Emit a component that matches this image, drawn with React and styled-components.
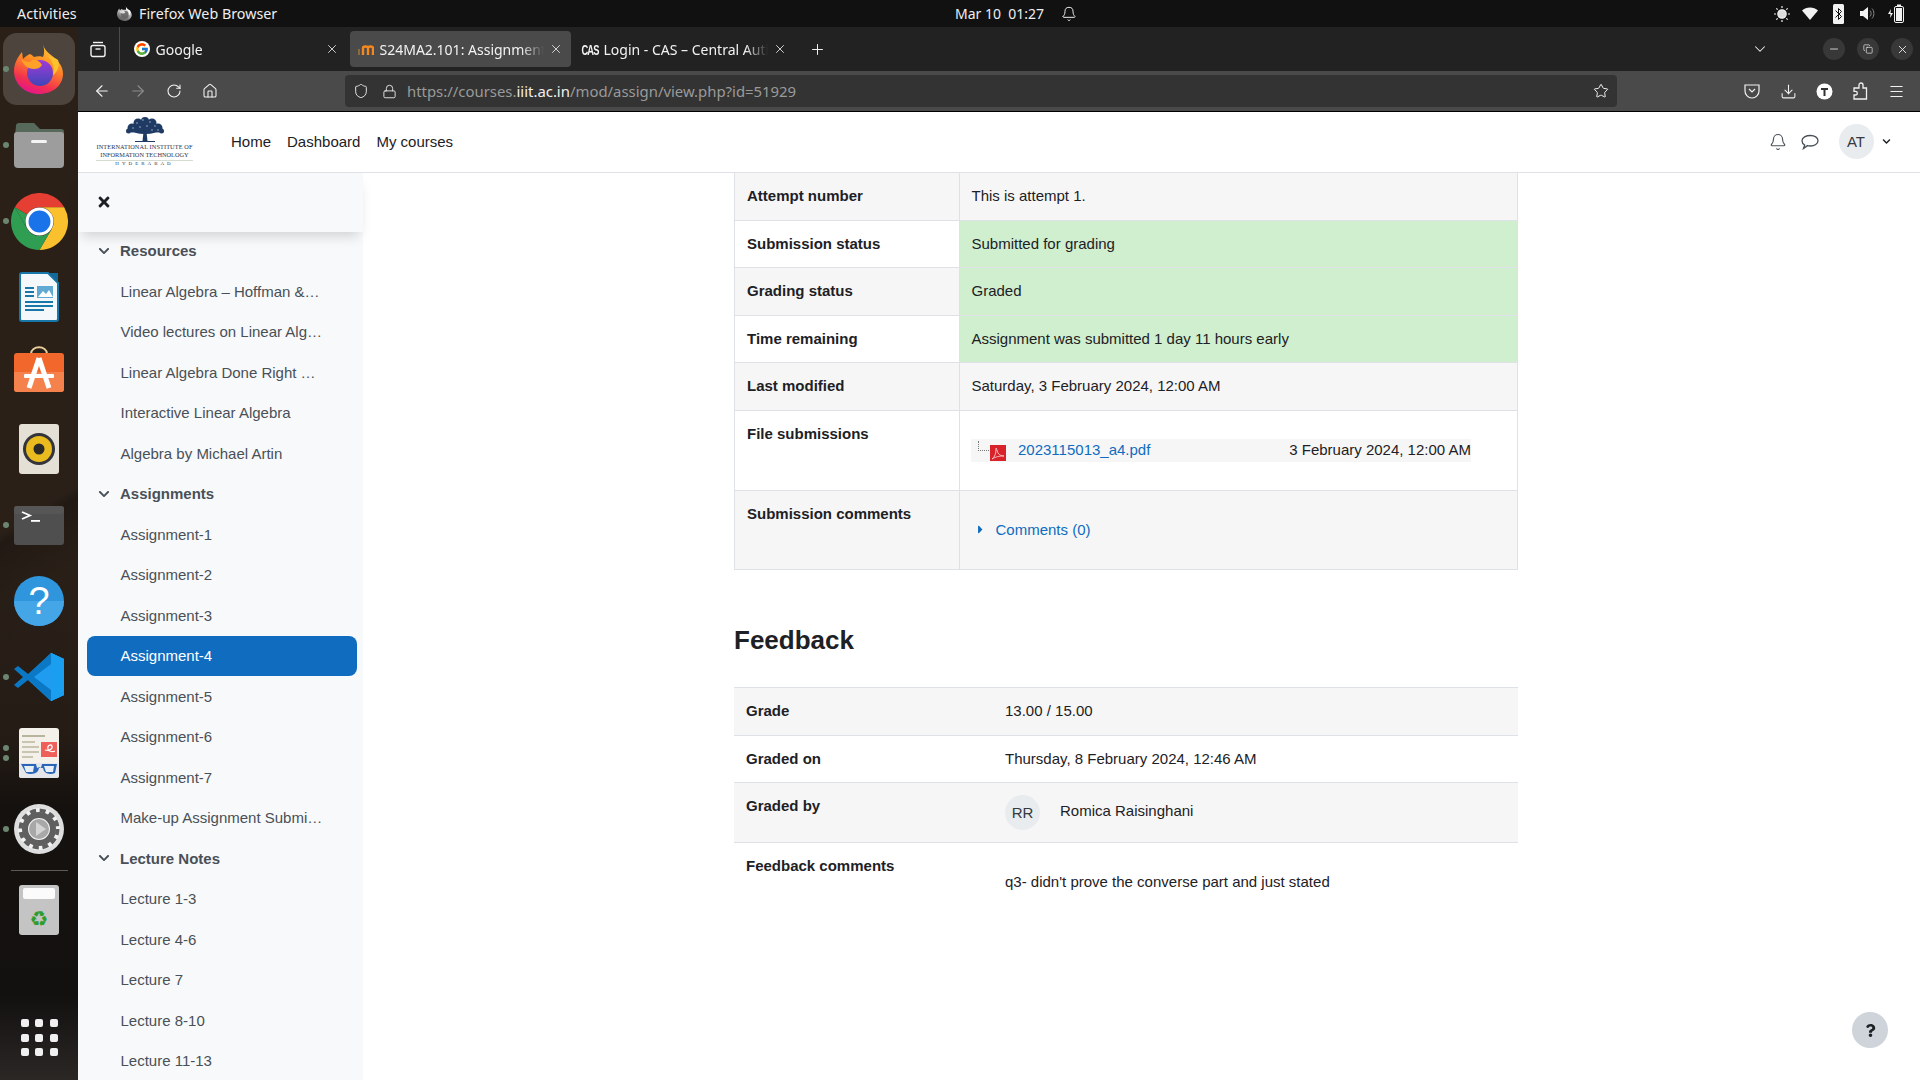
import React from 'react'
import styled, { createGlobalStyle } from 'styled-components'
import {
  ArrowLeft, ArrowRight, RotateCw, House, Shield, Lock, Star, Download, Menu,
  ChevronDown, X, Plus, Bell, Minus, Copy,
} from 'lucide-react'
import { FcGoogle } from 'react-icons/fc'
import { FaTimes, FaChevronDown, FaCaretRight, FaQuestion } from 'react-icons/fa'

const GlobalStyle = createGlobalStyle`
html, body { margin: 0; padding: 0; background: #fff; overflow: hidden; }
* { box-sizing: border-box; }
`

const Screen = styled.div`
width: 1920px;
height: 1080px;
overflow: hidden;
display: flex;
flex-direction: column;
position: relative;
font-family: "Liberation Sans", Arial, sans-serif;
font-size: 15px;
color: #1d2125;`

/* gnome top bar */
const TopBar = styled.div`
height: 27px;
flex: none;
background: #111;
color: #eee;
display: flex;
align-items: center;
font-family: "Noto Sans", sans-serif;
font-size: 14.3px;`

const Activities = styled.span`
margin-left: 17px;
width: 100px;`

const AppName = styled.span`
display: flex;
align-items: center;
gap: 7px;
width: 838px;`

const MonoIcon = styled.span`
display: flex;
filter: grayscale(1) brightness(1.3);`

const Clock = styled.span`
width: 106px;
font-size: 14px;
white-space: pre;`

const TrayIcons = styled.div`
margin-left: auto;
display: flex;
align-items: center;
padding-right: 10px;`

const TrayIcon = styled.span`
width: 28.5px;
display: flex;
justify-content: center;`

const Body = styled.div`
flex: 1;
display: flex;
min-height: 0;`

/* dock */
const Dock = styled.div`
width: 78px;
flex: none;
display: flex;
flex-direction: column;
align-items: center;
padding: 6px 0 24px;
gap: 4px;
background:
  linear-gradient(148deg, transparent 0, transparent 46%, rgba(0,0,0,.22) 47%, rgba(0,0,0,.05) 52%, transparent 58%),
  linear-gradient(180deg, #2a2018 0, #2a2018 52%, #241b15 68%, #15110e 74%, #131110 92%, #2a2725 100%);`

const DockItem = styled.div`
position: relative;
width: 72px;
height: 72px;
flex: none;
border-radius: 14px;
display: flex;
align-items: center;
justify-content: center;
background: ${props => props.$active ? "#4c443d" : "transparent"};`

const Dots = styled.div`
position: absolute;
left: 0;
top: 50%;
transform: translateY(-50%);
display: flex;
flex-direction: column;
gap: 4px;`

const Dot = styled.span`
display: block;
width: 6px;
height: 6px;
border-radius: 50%;
background: #6c8570;`

const DockSeparator = styled.div`
width: 57px;
height: 1px;
flex: none;
background: #5c5a58;
margin: 1px 0 -1px;`

const AppGrid = styled.div`
margin-top: auto;
display: grid;
grid-template-columns: repeat(3, 8px);
grid-auto-rows: 8px;
gap: 6.5px;`

const AppGridDot = styled.span`
background: #f0f0f0;
border-radius: 2px;`

/* firefox */
const Browser = styled.div`
flex: 1;
min-width: 0;
display: flex;
flex-direction: column;`

const TabStrip = styled.div`
height: 44px;
flex: none;
background: #222;
display: flex;
align-items: center;
color: #f2f2f2;
font-family: "Noto Sans", sans-serif;
font-size: 14px;`

const TabManager = styled.div`
width: 42px;
height: 44px;
flex: none;
padding-right: 2px;
display: flex;
align-items: center;
justify-content: center;
border-right: 1px solid #4c4c4c;
margin-right: 6px;`

const Tab = styled.div`
width: 221px;
height: 36px;
flex: none;
margin-right: 3px;
border-radius: 4px;
padding: 0 8px;
display: flex;
align-items: center;
gap: 5.5px;
background: ${props => props.$active ? "#4a4a4a" : "transparent"};`

const TabIcon = styled.span`
width: 16px;
height: 16px;
flex: none;
display: flex;
align-items: center;
justify-content: center;`

const GoogleBadge = styled(TabIcon)`
background: #fff;
border-radius: 50%;`

const CasMark = styled(TabIcon)`
font-family: "Liberation Sans", sans-serif;
font-weight: 700;
font-size: 15px;
letter-spacing: -1.5px;
transform: scaleX(.62);`

const TabTitle = styled.span`
flex: 1;
min-width: 0;
overflow: hidden;
white-space: nowrap;
mask-image: linear-gradient(90deg, #000 86%, transparent 100%);`

const NewTab = styled.div`
margin-left: 11px;
display: flex;`

const WindowControls = styled.div`
margin-left: auto;
display: flex;
align-items: center;
padding-right: 7px;`

const TabList = styled.div`
margin-right: 42px;
display: flex;`

const WindowButton = styled.div`
width: 22px;
height: 22px;
border-radius: 50%;
margin-left: 12px;
background: #383838;
display: flex;
align-items: center;
justify-content: center;`

const NavBar = styled.div`
height: 41px;
flex: none;
background: #4a4a4a;
border-bottom: 1px solid #000;
padding-left: 6px;
display: flex;
align-items: center;`

const NavButton = styled.div`
width: 36px;
height: 32px;
flex: none;
display: flex;
align-items: center;
justify-content: center;`

const UrlBar = styled.div`
width: 1272px;
height: 32px;
margin-left: 117px;
flex: none;
background: #333;
border-radius: 4px;
display: flex;
align-items: center;
font-family: "Noto Sans", sans-serif;
font-size: 14.9px;
color: #9a9a9a;
position: relative;`

const UrlIcon = styled.span`
width: 16px;
display: flex;
justify-content: center;
margin-left: ${props => props.$gap}px;`

const UrlText = styled.span`
margin-left: 10px;`

const UrlHost = styled.span`
color: #f0f0f0;`

const UrlStar = styled.span`
margin-left: auto;
margin-right: 8px;
display: flex;`

const Extensions = styled.div`
margin-left: auto;
padding-right: 6px;
display: flex;`

/* moodle page */
const Page = styled.div`
flex: 1;
min-height: 0;
background: #fff;
display: flex;
flex-direction: column;`

const Header = styled.header`
height: 61px;
flex: none;
border-bottom: 1px solid #dee2e6;
display: flex;
align-items: center;
padding: 0 0 1px 18px;`

const Logo = styled.div`
width: 97px;
height: 50px;
flex: none;
display: flex;
flex-direction: column;
align-items: center;
font-family: "Liberation Serif", serif;
color: #2b3550;
font-size: 6.3px;
line-height: 8px;
white-space: nowrap;`

const LogoLine = styled.span`
letter-spacing: ${props => props.$spacing}px;`

const LogoPlace = styled.span`
width: 100%;
margin-top: 1px;
border-top: 1px solid #d5dcd0;
text-align: center;
font-size: 5px;
line-height: 6px;
letter-spacing: 3px;`

const TopNav = styled.nav`
margin-left: 38px;
display: flex;
gap: 16px;`

const HeaderRight = styled.div`
margin-left: auto;
padding-right: 29.5px;
display: flex;
align-items: center;`

const HeaderIcon = styled.span`
width: 32px;
display: flex;
justify-content: center;`

const Avatar = styled.span`
width: 35px;
height: 35px;
border-radius: 50%;
background: #e9ecef;
color: #343a40;
display: flex;
align-items: center;
justify-content: center;
flex: none;`

const UserAvatar = styled(Avatar)`
margin: 0 8px 0 13px;`

const Content = styled.div`
flex: 1;
min-height: 0;
display: flex;`

const Sidebar = styled.aside`
width: 285px;
flex: none;
background: #f8f9fa;
color: #495057;`

const SidebarTop = styled.div`
height: 59px;
margin-bottom: -1.5px;
position: relative;
background: #f8f9fa;
box-shadow: 0 8px 12px -4px rgba(0,0,0,.16);
padding: 0 0 2px 18px;
display: flex;
align-items: center;
color: #1d2125;`

const SideHeading = styled.div`
height: 40.5px;
display: flex;
align-items: center;
font-weight: 700;
padding-left: 20px;
gap: 10px;`

const SideLink = styled.div`
height: 40.5px;
margin: 0 6px 0 9px;
padding-left: 33.5px;
border-radius: 8px;
display: flex;
align-items: center;
white-space: nowrap;
background: ${props => props.$active ? "#0f6cbf" : "transparent"};
color: ${props => props.$active ? "#fff" : "#495057"};`

const Main = styled.main`
flex: 1;
padding-left: 371px;`

const Column = styled.div`
width: 784px;`

const StatusTable = styled.div`
border: 1px solid #dee2e6;
border-top: 0;`

const StatusRow = styled.div`
display: grid;
grid-template-columns: 225px 1fr;
height: ${props => props.$height}px;
border-bottom: 1px solid #dee2e6;
&:last-child { border-bottom: 0; }
background: ${props => props.$shade ? "#f6f6f6" : "#fff"};`

const RowLabel = styled.div`
font-weight: 700;
padding: 12px 0 0 12px;
line-height: 22px;
border-right: 1px solid #dee2e6;`

const RowValue = styled.div`
padding: 12px 0 0 11.5px;
line-height: 22px;
background: ${props => props.$green ? "#cfefcf" : "transparent"};`

const FilePill = styled.div`
width: 500px;
height: 23px;
margin-top: 16px;
margin-left: -0.5px;
background: #f6f6f6;
padding-left: 7px;
display: flex;
align-items: center;`

const TreeLine = styled.span`
width: 11px;
height: 10px;
flex: none;
align-self: flex-start;
margin-top: 2px;
border-left: 1px dotted #777;
border-bottom: 1px dotted #777;`

const PdfIcon = styled.span`
width: 16px;
height: 16px;
flex: none;
margin-top: 6px;
margin-left: 1px;
display: flex;`

const FileLink = styled.a`
color: #0f6cbf;
margin-left: 12px;`

const FileDate = styled.span`
margin-left: auto;`

const CommentsToggle = styled.div`
margin-top: 16px;
padding-left: 2px;
display: flex;
align-items: center;
gap: 9px;
color: #0f6cbf;`

const Heading = styled.h3`
margin: 55px 0 31px;
font-size: 26px;
line-height: 31px;
font-weight: 700;`

const FeedbackTable = styled.div`
border-top: 1px solid #dee2e6;`

const FeedbackRow = styled.div`
display: grid;
grid-template-columns: 259px 1fr;
height: ${props => props.$height}px;
padding: 12px 0 0 12px;
line-height: 22px;
border-bottom: ${props => props.$last ? "0" : "1px solid #dee2e6"};
background: ${props => props.$shade ? "#f6f6f6" : "#fff"};`

const FeedbackLabel = styled.div`
font-weight: 700;`

const Grader = styled.div`
display: flex;
align-items: center;
align-self: start;
gap: 20px;`

const GraderName = styled.span`
margin-top: -3px;`

const CommentText = styled.div`
margin-top: 16px;`

const HelpButton = styled.div`
position: absolute;
right: 32px;
bottom: 32px;
width: 36px;
height: 36px;
border-radius: 50%;
background: #ced4da;
display: flex;
align-items: center;
justify-content: center;
color: #1d2125;`

/* drawings */
const FirefoxIcon = ({ size = 50, id = "ff" }) => (
  <svg width={size} height={size} viewBox="0 0 50 50">
    <defs>
      <linearGradient id={id + "Body"} x1="0.75" y1="0" x2="0.35" y2="1">
        <stop offset="0" stopColor="#ffd43a" />
        <stop offset=".4" stopColor="#ff8a24" />
        <stop offset=".78" stopColor="#f2304f" />
        <stop offset="1" stopColor="#e3158c" />
      </linearGradient>
      <linearGradient id={id + "Globe"} x1="0.5" y1="0" x2="0.5" y2="1">
        <stop offset="0" stopColor="#a13bd8" />
        <stop offset="1" stopColor="#3f45b8" />
      </linearGradient>
    </defs>
    <path d="M29 0c1 5 4 8 8 11 7 5 12 11 12 19 0 11-10 20-24 20C11 50 0 40 0 27 0 20 3 14 8 8l1 7c2-2 4-4 7-5 2 1 3 2 4 3 3-1 7-1 9 0 2-4 1-9 0-13z" fill={`url(#${id}Body)`} />
    <circle cx="26" cy="29" r="13" fill={`url(#${id}Globe)`} />
    <path d="M7 15c2 6 7 10 13 10 3 0 6-1 8-4-2-4-6-6-10-5l-2 2c-3 0-6-1-9-3z" fill="#ffa028" />
    <path d="M34 12c4 5 7 11 5 19 5-3 7-10 5-15-2-2-6-3-10-4z" fill="#ffc22e" />
  </svg>
)

const FilesIcon = () => (
  <svg width="50" height="46" viewBox="0 0 50 46">
    <path d="M2 4a3 3 0 0 1 3-3h15l6 6h21a3 3 0 0 1 3 3v12H0z" fill="#56695a" />
    <path d="M0 13a3 3 0 0 1 3-3h44a3 3 0 0 1 3 3v29a4 4 0 0 1-4 4H4a4 4 0 0 1-4-4z" fill="#9d9d9d" />
    <rect x="17" y="18" width="16" height="3" rx="1.5" fill="#f4f4f4" />
  </svg>
)

const ChromeIcon = () => (
  <svg width="57" height="57" viewBox="0 0 48 48">
    <path d="M3.2 12A24 24 0 0 1 44.8 12H24A12 12 0 0 0 13.6 18Z" fill="#e53f33" />
    <path d="M44.8 12A24 24 0 0 1 24 48L34.4 30A12 12 0 0 0 24 12Z" fill="#fbc02d" />
    <path d="M3.2 12A24 24 0 0 0 24 48L34.4 30A12 12 0 0 1 13.6 30Z" fill="#2f9e52" />
    <path d="M3.2 12L13.6 30A12 12 0 0 1 13.6 18Z" fill="#2f9e52" />
    <circle cx="24" cy="24" r="11.8" fill="#fff" />
    <circle cx="24" cy="24" r="9.2" fill="#1a73e8" />
  </svg>
)

const WriterIcon = () => (
  <svg width="40" height="50" viewBox="0 0 40 50">
    <path d="M1 3a2 2 0 0 1 2-2h26l10 10v36a2 2 0 0 1-2 2H3a2 2 0 0 1-2-2z" fill="#f4f8fb" stroke="#1777a8" strokeWidth="2" />
    <path d="M30 1l9 0 0 9z" fill="#126a98" />
    <rect x="6" y="15" width="9" height="2" fill="#1777a8" />
    <rect x="6" y="19" width="9" height="2" fill="#1777a8" />
    <rect x="6" y="23" width="9" height="2" fill="#1777a8" />
    <path d="M18 14h16v12H18z" fill="#5fa9d3" />
    <path d="M19 25l5-6 3 3 3-4 4 7z" fill="#fff" />
    <rect x="6" y="29" width="28" height="2" fill="#1777a8" />
    <rect x="6" y="33" width="28" height="2" fill="#1777a8" />
    <rect x="6" y="37" width="19" height="2" fill="#1777a8" />
  </svg>
)

const StoreIcon = () => (
  <svg width="50" height="54" viewBox="0 0 50 54">
    <path d="M17 8c0-9 16-9 16 0" fill="none" stroke="#e9cd9a" strokeWidth="2" />
    <path d="M0 10a3 3 0 0 1 3-3h44a3 3 0 0 1 3 3v33a3 3 0 0 1-3 3H3a3 3 0 0 1-3-3z" fill="#f2682c" />
    <path d="M0 26h50v17a3 3 0 0 1-3 3H3a3 3 0 0 1-3-3z" fill="#f5814c" />
    <path d="M25 12L15 42M25 12l10 30" stroke="#fff" strokeWidth="5" fill="none" />
    <rect x="10" y="28" width="30" height="4" rx="1" fill="#fff" />
  </svg>
)

const SpeakerIcon = () => (
  <svg width="40" height="50" viewBox="0 0 40 50">
    <rect width="40" height="50" rx="3" fill="#e4e0d6" />
    <circle cx="20" cy="25" r="16" fill="#34343c" />
    <circle cx="20" cy="25" r="13" fill="#eabb1e" />
    <circle cx="20" cy="25" r="5.5" fill="#2c2a26" />
  </svg>
)

const TerminalIcon = () => (
  <svg width="50" height="39" viewBox="0 0 50 39">
    <rect width="50" height="39" rx="3" fill="#4f4f4f" />
    <rect width="50" height="8" rx="3" fill="#565656" />
    <path d="M8 6l8 3.5-8 3.5" fill="none" stroke="#fff" strokeWidth="1.8" />
    <rect x="17" y="14" width="9" height="1.8" fill="#fff" />
  </svg>
)

const HelpIcon = () => (
  <svg width="50" height="50" viewBox="0 0 50 50">
    <circle cx="25" cy="25" r="25" fill="#2f95dc" />
    <path d="M0 25a25 25 0 0 0 50 0z" fill="#44a6e6" />
    <text x="25" y="38" fontFamily="Liberation Sans" fontSize="38" fill="#fff" textAnchor="middle">?</text>
  </svg>
)

const VscodeIcon = () => (
  <svg width="50" height="50" viewBox="0 0 50 50">
    <path d="M37 1L50 7v36l-13 6-25-23z" fill="#1f9cf0" />
    <path d="M37 1L50 7v36l-13 6z" fill="#2db1f7" />
    <path d="M4 14L0 17l9 8-9 8 4 3 10-8 23 21v-11L20 25 37 12V1L14 22z" fill="#0a78c4" />
    <path d="M37 1v48l13-6V7z" fill="#1a9ff0" />
  </svg>
)

const ReaderIcon = () => (
  <svg width="40" height="50" viewBox="0 0 40 50">
    <rect width="40" height="50" rx="3" fill="#f3f1ea" />
    <rect x="3" y="7" width="23" height="2" fill="#b9b49c" />
    <rect x="3" y="13" width="13" height="2" fill="#c9c5b0" />
    <rect x="3" y="18" width="17" height="2" fill="#c9c5b0" />
    <rect x="3" y="23" width="17" height="2" fill="#c9c5b0" />
    <rect x="3" y="28" width="11" height="2" fill="#c9c5b0" />
    <rect x="22" y="14" width="16" height="15" fill="#f0605a" />
    <path d="M26 22c4 1 8-1 7-4-1-2-5-1-4 3 1 3 5 3 7 2" fill="none" stroke="#fff" strokeWidth="1.2" />
    <rect y="35" width="40" height="15" rx="2" fill="#e4e6ea" />
    <path d="M2 36h15l1 4c2-1 3-1 4 0l1-4h15l-2 9c-4 2-9 1-11-2l-1-3h-4l-1 3c-2 3-8 4-12 2z" fill="#2a66b8" />
    <path d="M5 38h10l-1 6H7zM25 38h10l-1 6h-7z" fill="#e8eef5" />
  </svg>
)

const SettingsIcon = () => (
  <svg width="50" height="50" viewBox="0 0 50 50">
    <circle cx="25" cy="25" r="25" fill="#dedede" />
    <circle cx="25" cy="25" r="21" fill="#f2f2f2" />
    <circle cx="25" cy="25" r="14" fill="none" stroke="#5f5f5f" strokeWidth="6" />
    <circle cx="25" cy="25" r="18.500" fill="none" stroke="#5f5f5f" strokeWidth="4" strokeDasharray="6 3.700" />
    <circle cx="25" cy="25" r="10" fill="#a8a8a8" />
    <path d="M22 18l10 7-10 7z" fill="#d4d4d4" />
  </svg>
)

const TrashIcon = () => (
  <svg width="40" height="50" viewBox="0 0 40 50">
    <rect width="40" height="50" rx="3" fill="#c4c4c4" />
    <rect x="4" y="3" width="32" height="11" rx="2" fill="#fbfbfb" />
    <text x="20" y="41" fontFamily="DejaVu Sans" fontSize="21" fill="#2f9c2f" textAnchor="middle">♻</text>
  </svg>
)

const TabManagerIcon = () => (
  <svg width="16" height="17" viewBox="0 0 16 17" fill="none" stroke="#f2f2f2" strokeWidth="1.4">
    <path d="M3 1.5h10" />
    <rect x="1" y="4.5" width="14" height="11" rx="2" />
    <path d="M5.5 8h5" />
  </svg>
)

const MoodleFavicon = () => (
  <svg width="16" height="14" viewBox="0 0 16 14">
    <path d="M1 13V7" stroke="#8a6a40" strokeWidth="2" />
    <path d="M5 13V6c0-2 5-2 5 0v7M10 6c0-2 5-2 5 0v7" fill="none" stroke="#f5891f" strokeWidth="2.4" />
  </svg>
)

const PdfGlyph = () => (
  <svg width="16" height="16" viewBox="0 0 16 16">
    <rect width="16" height="16" fill="#d9232a" />
    <path d="M2 14c3-2 4-6 4-10 0-3 1 2 2 4s4 3 6 3c-3 0-7 0-12 3z" fill="none" stroke="#f6c9c9" strokeWidth=".9" />
  </svg>
)

const TreeLogo = () => (
  <svg width="40" height="26" viewBox="0 0 40 26" fill="#1f3a63">
    <circle cx="20" cy="4" r="4" />
    <circle cx="13" cy="6" r="4.500" />
    <circle cx="27" cy="6" r="4.500" />
    <circle cx="7" cy="11" r="4.500" />
    <circle cx="33" cy="11" r="4.500" />
    <circle cx="20" cy="9" r="6" />
    <circle cx="3.500" cy="14" r="2.500" />
    <circle cx="36.500" cy="14" r="2.500" />
    <ellipse cx="20" cy="13" rx="14" ry="4" />
    <path d="M18.500 15h3l1 9h-5z" />
    <path d="M10 24.500h20" stroke="#1f3a63" />
    <g fill="#9fb2c9">
      <circle cx="12" cy="6" r=".8" /><circle cx="18" cy="3" r=".8" /><circle cx="25" cy="5" r=".8" />
      <circle cx="30" cy="9" r=".8" /><circle cx="8" cy="11" r=".8" /><circle cx="15" cy="10" r=".8" />
      <circle cx="22" cy="9" r=".8" /><circle cx="33" cy="13" r=".8" /><circle cx="27" cy="13" r=".8" />
    </g>
  </svg>
)

const BrightnessIcon = () => (
  <svg width="16" height="16" viewBox="0 0 16 16" fill="none" stroke="#eee" strokeWidth="1.2">
    <circle cx="8" cy="8" r="4.2" fill="#ddd" />
    <path d="M8 0v2M8 14v2M0 8h2M14 8h2M2.3 2.3l1.4 1.4M12.3 12.3l1.4 1.4M2.3 13.7l1.4-1.4M12.3 3.7l1.4-1.4" />
  </svg>
)

const WifiIcon = () => (
  <svg width="16" height="13" viewBox="0 0 16 13">
    <path d="M0 3.5C4-.5 12-.5 16 3.5L8 13z" fill="#f2f2f2" />
  </svg>
)

const BluetoothIcon = () => (
  <svg width="11" height="20" viewBox="0 0 11 20">
    <rect width="11" height="20" rx="1.5" fill="#f2f2f2" />
    <path d="M2.5 6.5l6 6-3 3V4.5l3 3-6 6" fill="none" stroke="#111" strokeWidth="1" />
  </svg>
)

const VolumeIcon = () => (
  <svg width="15" height="15" viewBox="0 0 15 15">
    <path d="M0 5h3l5-4v13l-5-4H0z" fill="#f2f2f2" />
    <path d="M10 4.5c1.5 1.5 1.5 4.5 0 6M12 2.5c2.500 2.500 2.500 7.500 0 10" fill="none" stroke="#888" strokeWidth="1" />
  </svg>
)

const BatteryIcon = () => (
  <svg width="16" height="19" viewBox="0 0 16 19">
    <path d="M3 5L0 10h2.500L2 14l3-5H2.500z" fill="#f2f2f2" />
    <rect x="6.500" y="2.500" width="9" height="16" rx="1.500" fill="none" stroke="#f2f2f2" />
    <rect x="8" y="4" width="6" height="13" fill="#f2f2f2" />
    <rect x="9" y="0.500" width="4" height="2" fill="#f2f2f2" />
  </svg>
)

const PocketIcon = () => (
  <svg width="16" height="16" viewBox="0 0 16 16" fill="none" stroke="#f2f2f2" strokeWidth="1.2">
    <path d="M1 2h14v6a7 7 0 0 1-14 0z" />
    <path d="M5 6l3 3 3-3" />
  </svg>
)

const TIcon = () => (
  <svg width="17" height="17" viewBox="0 0 17 17">
    <circle cx="8.500" cy="8.500" r="8" fill="#fff" />
    <path d="M5 5h7v2H9.500v6h-2V7H5z" fill="#333" />
  </svg>
)

const PuzzleIcon = () => (
  <svg width="16" height="18" viewBox="0 0 16 18" fill="none" stroke="#f2f2f2" strokeWidth="1.3">
    <path d="M2 17v-4h1.500a1.800 1.800 0 0 0 0-3.600H2V6h5V3a2 2 0 0 1 4 0v3h3.500v11z" />
  </svg>
)

const ChatIcon = () => (
  <svg width="18" height="16" viewBox="0 0 18 16" fill="none" stroke="#495057" strokeWidth="1.3">
    <path d="M9.500 1.500c4 0 7.500 2 7.500 5.200s-3.500 5.300-7.500 5.300c-1 0-2 0-3-.4L2.500 14.500l1.200-3.500C2 10 1 8.500 1 6.700 1 3.500 5 1.500 9.500 1.500z" />
  </svg>
)

const SIDE_ITEMS = [
  { heading: "Resources" },
  { label: "Linear Algebra – Hoffman &…" },
  { label: "Video lectures on Linear Alg…" },
  { label: "Linear Algebra Done Right …" },
  { label: "Interactive Linear Algebra" },
  { label: "Algebra by Michael Artin" },
  { heading: "Assignments" },
  { label: "Assignment-1" },
  { label: "Assignment-2" },
  { label: "Assignment-3" },
  { label: "Assignment-4", active: true },
  { label: "Assignment-5" },
  { label: "Assignment-6" },
  { label: "Assignment-7" },
  { label: "Make-up Assignment Submi…" },
  { heading: "Lecture Notes" },
  { label: "Lecture 1-3" },
  { label: "Lecture 4-6" },
  { label: "Lecture 7" },
  { label: "Lecture 8-10" },
  { label: "Lecture 11-13" },
]

const DOCK_APPS = [
  { icon: <FirefoxIcon />, dots: 1, active: true },
  { icon: <FilesIcon />, dots: 1 },
  { icon: <ChromeIcon />, dots: 1 },
  { icon: <WriterIcon />, dots: 0 },
  { icon: <StoreIcon />, dots: 0 },
  { icon: <SpeakerIcon />, dots: 0 },
  { icon: <TerminalIcon />, dots: 1 },
  { icon: <HelpIcon />, dots: 0 },
  { icon: <VscodeIcon />, dots: 1 },
  { icon: <ReaderIcon />, dots: 2 },
  { icon: <SettingsIcon />, dots: 1 },
]

const renderDockApp = (app, idx) => (
  <DockItem key={idx} $active={app.active}>
    {app.dots > 0 && (
      <Dots>
        {Array.from({ length: app.dots }).map((_, i) => <Dot key={i} />)}
      </Dots>
    )}
    {app.icon}
  </DockItem>
)

const App = () => {
  return (
    <Screen>
      <GlobalStyle />
      <TopBar>
        <Activities>Activities</Activities>
        <AppName><MonoIcon><FirefoxIcon size={15} id="ffBar" /></MonoIcon>Firefox Web Browser</AppName>
        <Clock>Mar 10  01:27</Clock>
        <Bell size={16} color="#eee" strokeWidth={1.5} />
        <TrayIcons>
          <TrayIcon><BrightnessIcon /></TrayIcon>
          <TrayIcon><WifiIcon /></TrayIcon>
          <TrayIcon><BluetoothIcon /></TrayIcon>
          <TrayIcon><VolumeIcon /></TrayIcon>
          <TrayIcon><BatteryIcon /></TrayIcon>
        </TrayIcons>
      </TopBar>
      <Body>
        <Dock>
          {DOCK_APPS.map(renderDockApp)}
          <DockSeparator />
          <DockItem><TrashIcon /></DockItem>
          <AppGrid>
            {Array.from({ length: 9 }).map((_, i) => <AppGridDot key={i} />)}
          </AppGrid>
        </Dock>
        <Browser>
          <TabStrip>
            <TabManager><TabManagerIcon /></TabManager>
            <Tab>
              <GoogleBadge><FcGoogle size={14} /></GoogleBadge>
              <TabTitle>Google</TabTitle>
              <X size={14} strokeWidth={1.4} />
            </Tab>
            <Tab $active>
              <TabIcon><MoodleFavicon /></TabIcon>
              <TabTitle>S24MA2.101: Assignment-4</TabTitle>
              <X size={14} strokeWidth={1.4} />
            </Tab>
            <Tab>
              <CasMark>CAS</CasMark>
              <TabTitle>Login - CAS – Central Authentication</TabTitle>
              <X size={14} strokeWidth={1.4} />
            </Tab>
            <NewTab><Plus size={17} strokeWidth={1.4} /></NewTab>
            <WindowControls>
              <TabList><ChevronDown size={18} strokeWidth={1.4} /></TabList>
              <WindowButton><Minus size={12} strokeWidth={1.6} /></WindowButton>
              <WindowButton><Copy size={10} strokeWidth={1.6} /></WindowButton>
              <WindowButton><X size={13} strokeWidth={1.6} /></WindowButton>
            </WindowControls>
          </TabStrip>
          <NavBar>
            <NavButton><ArrowLeft size={18} color="#f2f2f2" strokeWidth={1.5} /></NavButton>
            <NavButton><ArrowRight size={18} color="#8c8c8c" strokeWidth={1.5} /></NavButton>
            <NavButton><RotateCw size={16} color="#f2f2f2" strokeWidth={1.6} /></NavButton>
            <NavButton><House size={16} color="#f2f2f2" strokeWidth={1.6} /></NavButton>
            <UrlBar>
              <UrlIcon $gap={8}><Shield size={16} color="#e4e4e4" strokeWidth={1.5} /></UrlIcon>
              <UrlIcon $gap={12}><Lock size={15} color="#e4e4e4" strokeWidth={1.5} /></UrlIcon>
              <UrlText>https://courses.<UrlHost>iiit.ac.in</UrlHost>/mod/assign/view.php?id=51929</UrlText>
              <UrlStar><Star size={16} color="#f2f2f2" strokeWidth={1.5} /></UrlStar>
            </UrlBar>
            <Extensions>
              <NavButton><PocketIcon /></NavButton>
              <NavButton><Download size={17} color="#f2f2f2" strokeWidth={1.5} /></NavButton>
              <NavButton><TIcon /></NavButton>
              <NavButton><PuzzleIcon /></NavButton>
              <NavButton><Menu size={17} color="#f2f2f2" strokeWidth={1.5} /></NavButton>
            </Extensions>
          </NavBar>
          <Page>
            <Header>
              <Logo>
                <TreeLogo />
                <LogoLine $spacing={0.1}>INTERNATIONAL INSTITUTE OF</LogoLine>
                <LogoLine $spacing={0.02}>INFORMATION TECHNOLOGY</LogoLine>
                <LogoPlace>HYDERABAD</LogoPlace>
              </Logo>
              <TopNav>
                <span>Home</span>
                <span>Dashboard</span>
                <span>My courses</span>
              </TopNav>
              <HeaderRight>
                <HeaderIcon><Bell size={18} color="#495057" strokeWidth={1.5} /></HeaderIcon>
                <HeaderIcon><ChatIcon /></HeaderIcon>
                <UserAvatar>AT</UserAvatar>
                <FaChevronDown size={9} color="#1d2125" />
              </HeaderRight>
            </Header>
            <Content>
              <Sidebar>
                <SidebarTop><FaTimes size={16} /></SidebarTop>
                {SIDE_ITEMS.map((item, idx) => item.heading
                  ? <SideHeading key={idx}><FaChevronDown size={12} />{item.heading}</SideHeading>
                  : <SideLink key={idx} $active={item.active}>{item.label}</SideLink>
                )}
              </Sidebar>
              <Main>
                <Column>
                  <StatusTable>
                    <StatusRow $height={47.5} $shade>
                      <RowLabel>Attempt number</RowLabel>
                      <RowValue>This is attempt 1.</RowValue>
                    </StatusRow>
                    <StatusRow $height={47.5}>
                      <RowLabel>Submission status</RowLabel>
                      <RowValue $green>Submitted for grading</RowValue>
                    </StatusRow>
                    <StatusRow $height={47.5} $shade>
                      <RowLabel>Grading status</RowLabel>
                      <RowValue $green>Graded</RowValue>
                    </StatusRow>
                    <StatusRow $height={47.5}>
                      <RowLabel>Time remaining</RowLabel>
                      <RowValue $green>Assignment was submitted 1 day 11 hours early</RowValue>
                    </StatusRow>
                    <StatusRow $height={47.5} $shade>
                      <RowLabel>Last modified</RowLabel>
                      <RowValue>Saturday, 3 February 2024, 12:00 AM</RowValue>
                    </StatusRow>
                    <StatusRow $height={80}>
                      <RowLabel>File submissions</RowLabel>
                      <RowValue>
                        <FilePill>
                          <TreeLine />
                          <PdfIcon><PdfGlyph /></PdfIcon>
                          <FileLink>2023115013_a4.pdf</FileLink>
                          <FileDate>3 February 2024, 12:00 AM</FileDate>
                        </FilePill>
                      </RowValue>
                    </StatusRow>
                    <StatusRow $height={78.5} $shade>
                      <RowLabel>Submission comments</RowLabel>
                      <RowValue>
                        <CommentsToggle><FaCaretRight size={13} />Comments (0)</CommentsToggle>
                      </RowValue>
                    </StatusRow>
                  </StatusTable>
                  <Heading>Feedback</Heading>
                  <FeedbackTable>
                    <FeedbackRow $height={48} $shade>
                      <FeedbackLabel>Grade</FeedbackLabel>
                      <div>13.00 / 15.00</div>
                    </FeedbackRow>
                    <FeedbackRow $height={47}>
                      <FeedbackLabel>Graded on</FeedbackLabel>
                      <div>Thursday, 8 February 2024, 12:46 AM</div>
                    </FeedbackRow>
                    <FeedbackRow $height={60} $shade>
                      <FeedbackLabel>Graded by</FeedbackLabel>
                      <Grader>
                        <Avatar>RR</Avatar>
                        <GraderName>Romica Raisinghani</GraderName>
                      </Grader>
                    </FeedbackRow>
                    <FeedbackRow $height={60} $last>
                      <FeedbackLabel>Feedback comments</FeedbackLabel>
                      <CommentText>q3- didn't prove the converse part and just stated</CommentText>
                    </FeedbackRow>
                  </FeedbackTable>
                </Column>
              </Main>
            </Content>
          </Page>
        </Browser>
      </Body>
      <HelpButton><FaQuestion size={13} /></HelpButton>
    </Screen>
  )
}

export default App
